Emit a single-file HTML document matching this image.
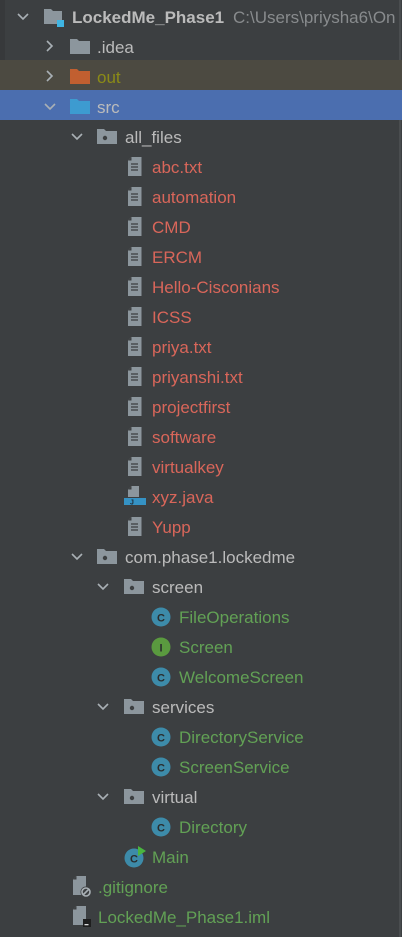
<!DOCTYPE html>
<html><head><meta charset="utf-8"><style>
*{margin:0;padding:0;box-sizing:border-box}
body{width:402px;height:937px;background:#3c3f41;position:relative;overflow:hidden;font-family:"Liberation Sans",sans-serif;font-size:17px}
.r{position:absolute;left:0;width:402px;height:30px}
.t{position:absolute;top:7px;line-height:19px;white-space:nowrap}
.i{position:absolute;top:7px}
.c{position:absolute;top:8px}
.red{color:#d9665a}.grn{color:#62a155}.gry{color:#bbbbbb}
</style></head><body>
<div style="position:absolute;right:1px;top:0;width:2px;height:937px;background:#4a4d4f"></div>
<div style="position:absolute;left:0;top:0;width:5px;height:60px;background:#37393b"></div>
<svg width="0" height="0" style="position:absolute">
<defs>
<g id="cd"><path d="M2 5l5 5 5-5" stroke="#a9b0b5" stroke-width="1.6" fill="none"/></g>
<g id="cr"><path d="M4 2l5 5-5 5" stroke="#a9b0b5" stroke-width="1.6" fill="none"/></g>
<g id="fd"><path d="M0 1h7l2 2h11v13H0z"/></g>
<g id="pk"><path d="M0 1h7l2 2h11v13H0z" fill="#8c969d"/><circle cx="8" cy="10" r="2.2" fill="#3c3f41"/></g>
<g id="fl"><path d="M4.5 0h10v19H1V3.5z" fill="#8c969d"/><path d="M1 3.5h3.5V0z" fill="#3c3f41"/><path d="M4 7h7M4 10h7M4 13h7" stroke="#3c3f41" stroke-width="1.3"/></g>
<g id="cl"><circle cx="10" cy="10" r="9.5" fill="#3d8ba9"/><text x="10" y="14.5" font-size="11" text-anchor="middle" fill="#2a2d2e" font-family="Liberation Sans" font-weight="bold">C</text></g>
</defs></svg>

<div class="r" style="top:1px">
<svg class="c" style="left:16px" width="14" height="14"><use href="#cd"/></svg>
<svg class="i" style="left:43px" width="22" height="22"><path d="M1 1h7l2 2h9v13H1z" fill="#8c969d"/><rect x="14" y="12" width="7" height="7" fill="#3fb5e3"/></svg>
<span class="t gry" style="left:72px;font-weight:bold">LockedMe_Phase1</span>
<span class="t" style="left:233px;color:#888b8d">C:\Users\priysha6\On</span>
</div>
<div class="r" style="top:31px">
<svg class="c" style="left:43px" width="14" height="14"><use href="#cr"/></svg>
<svg class="i" style="left:70px;top:7px" width="22" height="18"><use href="#fd" fill="#8c969d"/></svg>
<span class="t gry" style="left:97px">.idea</span></div>
<div class="r" style="top:60px;background:#4c4a41;height:30px">
<svg class="c" style="left:43px;top:9px" width="14" height="14"><use href="#cr"/></svg>
<svg class="i" style="left:70px;top:8px" width="22" height="18"><use href="#fd" fill="#c15f30"/></svg>
<span class="t" style="left:97px;top:8px;color:#8b8b17">out</span></div>
<div class="r" style="top:90px;background:#4b6eaf">
<svg class="c" style="left:43px;top:9px" width="14" height="14"><use href="#cd"/></svg>
<svg class="i" style="left:70px;top:8px" width="22" height="18"><use href="#fd" fill="#3d9bd0"/></svg>
<span class="t gry" style="left:97px;top:8px">src</span></div>
<div class="r" style="top:121px">
<svg class="c" style="left:70px" width="14" height="14"><use href="#cd"/></svg>
<svg class="i" style="left:97px;top:7px" width="22" height="18"><use href="#pk"/></svg>
<span class="t gry" style="left:125px">all_files</span></div>

<div class="r" style="top:151px"><svg class="i" style="left:127px;top:6px" width="16" height="20"><use href="#fl"/></svg><span class="t red" style="left:152px">abc.txt</span></div>
<div class="r" style="top:181px"><svg class="i" style="left:127px;top:6px" width="16" height="20"><use href="#fl"/></svg><span class="t red" style="left:152px">automation</span></div>
<div class="r" style="top:211px"><svg class="i" style="left:127px;top:6px" width="16" height="20"><use href="#fl"/></svg><span class="t red" style="left:152px">CMD</span></div>
<div class="r" style="top:241px"><svg class="i" style="left:127px;top:6px" width="16" height="20"><use href="#fl"/></svg><span class="t red" style="left:152px">ERCM</span></div>
<div class="r" style="top:271px"><svg class="i" style="left:127px;top:6px" width="16" height="20"><use href="#fl"/></svg><span class="t red" style="left:152px">Hello-Cisconians</span></div>
<div class="r" style="top:301px"><svg class="i" style="left:127px;top:6px" width="16" height="20"><use href="#fl"/></svg><span class="t red" style="left:152px">ICSS</span></div>
<div class="r" style="top:331px"><svg class="i" style="left:127px;top:6px" width="16" height="20"><use href="#fl"/></svg><span class="t red" style="left:152px">priya.txt</span></div>
<div class="r" style="top:361px"><svg class="i" style="left:127px;top:6px" width="16" height="20"><use href="#fl"/></svg><span class="t red" style="left:152px">priyanshi.txt</span></div>
<div class="r" style="top:391px"><svg class="i" style="left:127px;top:6px" width="16" height="20"><use href="#fl"/></svg><span class="t red" style="left:152px">projectfirst</span></div>
<div class="r" style="top:421px"><svg class="i" style="left:127px;top:6px" width="16" height="20"><use href="#fl"/></svg><span class="t red" style="left:152px">software</span></div>
<div class="r" style="top:451px"><svg class="i" style="left:127px;top:6px" width="16" height="20"><use href="#fl"/></svg><span class="t red" style="left:152px">virtualkey</span></div>
<div class="r" style="top:481px"><svg class="i" style="left:124px;top:5px" width="22" height="22"><path d="M7.5 0h7.5v11H4V3.5z" fill="#8c969d"/><path d="M4 3.5h3.5V0z" fill="#3c3f41"/><rect x="0" y="12" width="22" height="7" fill="#3592c4"/><text x="6" y="18.5" font-size="7" fill="#1e2a33" font-family="Liberation Sans" font-weight="bold">J</text></svg><span class="t red" style="left:152px">xyz.java</span></div>
<div class="r" style="top:511px"><svg class="i" style="left:127px;top:6px" width="16" height="20"><use href="#fl"/></svg><span class="t red" style="left:152px">Yupp</span></div>

<div class="r" style="top:541px">
<svg class="c" style="left:70px" width="14" height="14"><use href="#cd"/></svg>
<svg class="i" style="left:97px;top:7px" width="22" height="18"><use href="#pk"/></svg>
<span class="t gry" style="left:125px">com.phase1.lockedme</span></div>
<div class="r" style="top:571px">
<svg class="c" style="left:96px" width="14" height="14"><use href="#cd"/></svg>
<svg class="i" style="left:124px;top:7px" width="22" height="18"><use href="#pk"/></svg>
<span class="t gry" style="left:152px">screen</span></div>
<div class="r" style="top:601px"><svg class="i" style="left:151px;top:6px" width="20" height="20"><use href="#cl"/></svg><span class="t grn" style="left:179px">FileOperations</span></div>
<div class="r" style="top:631px"><svg class="i" style="left:151px;top:6px" width="20" height="20"><circle cx="10" cy="10" r="9.5" fill="#5a9a3f"/><text x="10" y="14.5" font-size="11" text-anchor="middle" fill="#2a2d2e" font-family="Liberation Sans" font-weight="bold">I</text></svg><span class="t grn" style="left:179px">Screen</span></div>
<div class="r" style="top:661px"><svg class="i" style="left:151px;top:6px" width="20" height="20"><use href="#cl"/></svg><span class="t grn" style="left:179px">WelcomeScreen</span></div>
<div class="r" style="top:691px">
<svg class="c" style="left:96px" width="14" height="14"><use href="#cd"/></svg>
<svg class="i" style="left:124px;top:7px" width="22" height="18"><use href="#pk"/></svg>
<span class="t gry" style="left:152px">services</span></div>
<div class="r" style="top:721px"><svg class="i" style="left:151px;top:6px" width="20" height="20"><use href="#cl"/></svg><span class="t grn" style="left:179px">DirectoryService</span></div>
<div class="r" style="top:751px"><svg class="i" style="left:151px;top:6px" width="20" height="20"><use href="#cl"/></svg><span class="t grn" style="left:179px">ScreenService</span></div>
<div class="r" style="top:781px">
<svg class="c" style="left:96px" width="14" height="14"><use href="#cd"/></svg>
<svg class="i" style="left:124px;top:7px" width="22" height="18"><use href="#pk"/></svg>
<span class="t gry" style="left:152px">virtual</span></div>
<div class="r" style="top:811px"><svg class="i" style="left:151px;top:6px" width="20" height="20"><use href="#cl"/></svg><span class="t grn" style="left:179px">Directory</span></div>
<div class="r" style="top:841px"><svg class="i" style="left:124px;top:5px" width="24" height="22"><g transform="translate(0,2)"><use href="#cl"/></g><path d="M14 0l8 5-8 5z" fill="#4ab53f"/></svg><span class="t grn" style="left:152px">Main</span></div>
<div class="r" style="top:871px"><svg class="i" style="left:72px;top:5px" width="22" height="22"><path d="M4.5 0h9.5v19H1V3.5z" fill="#8c969d"/><path d="M1 3.5h3.5V0z" fill="#3c3f41"/><circle cx="14" cy="16" r="5.5" fill="#3c3f41"/><circle cx="14" cy="16" r="4" stroke="#a9b0b5" stroke-width="1.6" fill="none"/><path d="M11.5 18.5l5-5" stroke="#a9b0b5" stroke-width="1.6"/></svg><span class="t grn" style="left:98px">.gitignore</span></div>
<div class="r" style="top:901px"><svg class="i" style="left:72px;top:5px" width="22" height="22"><path d="M4.5 0h9.5v19H1V3.5z" fill="#8c969d"/><path d="M1 3.5h3.5V0z" fill="#3c3f41"/><rect x="11" y="13" width="8" height="8" fill="#1e1e1e"/><rect x="12.5" y="18" width="4" height="1.3" fill="#ddd"/></svg><span class="t grn" style="left:98px">LockedMe_Phase1.iml</span></div>
</body></html>
